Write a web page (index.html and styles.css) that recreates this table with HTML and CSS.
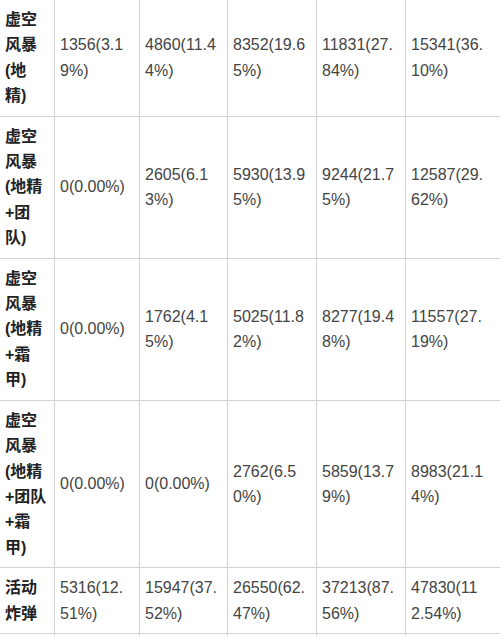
FILE: index.html
```html
<!DOCTYPE html>
<html lang="zh-CN">
<head>
<meta charset="utf-8">
<title>伤害数据表</title>
<link rel="stylesheet" href="styles.css">
</head>
<body>
<div class="wrap">
<table class="data">
  <colgroup>
    <col class="c1"><col class="c2"><col class="c3"><col class="c4"><col class="c5"><col class="c6">
  </colgroup>
  <tbody>
    <tr>
      <th>虚空风暴(地精)</th>
      <td>1356(3.19%)</td>
      <td>4860(11.44%)</td>
      <td>8352(19.65%)</td>
      <td>11831(27.84%)</td>
      <td class="last">15341(36.10%)</td>
    </tr>
    <tr>
      <th>虚空风暴(地精+团队)</th>
      <td>0(0.00%)</td>
      <td>2605(6.13%)</td>
      <td>5930(13.95%)</td>
      <td>9244(21.75%)</td>
      <td class="last">12587(29.62%)</td>
    </tr>
    <tr>
      <th>虚空风暴(地精+霜甲)</th>
      <td>0(0.00%)</td>
      <td>1762(4.15%)</td>
      <td>5025(11.82%)</td>
      <td>8277(19.48%)</td>
      <td class="last">11557(27.19%)</td>
    </tr>
    <tr>
      <th>虚空风暴(地精+团队+霜甲)</th>
      <td>0(0.00%)</td>
      <td>0(0.00%)</td>
      <td>2762(6.50%)</td>
      <td>5859(13.79%)</td>
      <td class="last">8983(21.14%)</td>
    </tr>
    <tr>
      <th>活动炸弹</th>
      <td>5316(12.51%)</td>
      <td>15947(37.52%)</td>
      <td>26550(62.47%)</td>
      <td>37213(87.56%)</td>
      <td class="last">47830(112.54%)</td>
    </tr>
    <tr class="tail">
      <th></th><td></td><td></td><td></td><td></td><td class="last"></td>
    </tr>
  </tbody>
</table>
</div>
</body>
</html>
```
FILE: styles.css
```css
html, body {
  margin: 0;
  padding: 0;
  background: #ffffff;
}
.wrap {
  margin: -1px 0 0 -1px;
}
.data {
  border-collapse: collapse;
  table-layout: fixed;
  width: 501px;
  font-family: "Liberation Sans", "Noto Sans CJK SC", sans-serif;
  font-size: 16px;
  line-height: 25.4px;
  color: #444444;
}
.c1 { width: 55px; }
.c2 { width: 85px; }
.c3 { width: 88px; }
.c4 { width: 89px; }
.c5 { width: 89px; }
.c6 { width: 95px; }
.data th,
.data td {
  border: 1px solid #d2d2d2;
  padding: 7px 7px 7px 5px;
  text-align: left;
  vertical-align: middle;
  word-break: break-all;
}
.data th {
  font-weight: bold;
  color: #222222;
}
.data td.last {
  padding-right: 14px;
}
.tail th,
.tail td {
  height: 40px;
}
```
